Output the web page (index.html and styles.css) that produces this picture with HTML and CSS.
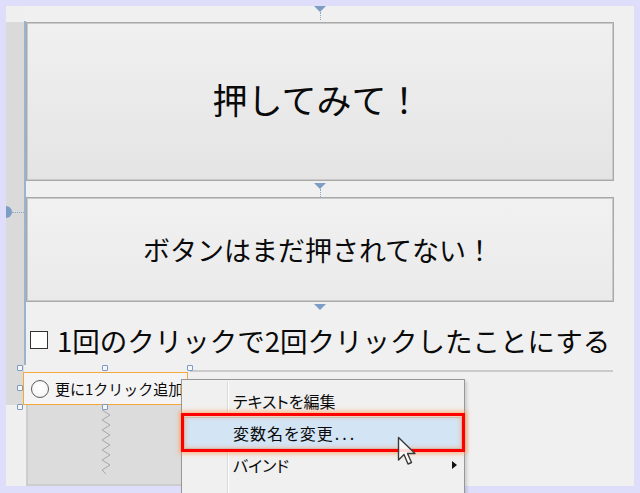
FILE: index.html
```html
<!DOCTYPE html>
<html lang="ja">
<head>
<meta charset="utf-8">
<link rel="stylesheet" href="styles.css">
</head>
<body>
<div class="panel">
  <div class="gutter"><div class="gutter-gray"></div></div>
  <div class="rail"></div>
  <div class="content">
    <div class="btn btn-big">押してみて！</div>
    <div class="btn btn-mid">ボタンはまだ押されてない！</div>
    <div class="check-row"><span class="box"></span><span>1回のクリックで2回クリックしたことにする</span></div>
    <div class="divider"></div>
    <div class="radio-row"><span class="radio"></span><span class="radio-text">更に1クリック追加</span></div>
    <div class="stack-area">
      <svg class="zigzag" width="14" height="64" viewBox="0 0 14 64"><polyline points="3,0 11,5 3,10 11,15 3,20 11,25 3,30 11,35 3,40 11,45 3,50 11,55 3,60 7,64" fill="none" stroke="#a8a8a8" stroke-width="1"/></svg>
    </div>
  </div>

  <div class="anchor anchor-top"><span class="tri"></span><span class="stem"></span></div>
  <div class="anchor anchor-mid"><span class="tri"></span><span class="stem"></span></div>
  <div class="anchor anchor-bot"><span class="tri"></span></div>
  <div class="anchor-left"><span class="half"></span><span class="hstem"></span></div>

  <span class="handle h1"></span>
  <span class="handle h2"></span>
  <span class="handle h3"></span>
  <span class="handle h4"></span>
  <span class="handle h5"></span>
  <span class="handle h6"></span>

  <div class="menu">
    <div class="item">テキストを編集</div>
    <div class="item active">変数名を変更<span class="dots">...</span></div>
    <div class="item">バインド<span class="sub"></span></div>
  </div>
  <div class="red-frame"></div>
  <svg class="cursor" width="22" height="32" viewBox="0 0 22 32"><path d="M1.5,1.5 L1.5,24 L7,18.5 L11,28 L14.5,26.5 L10.5,17.5 L18,17.5 Z" fill="#ffffff" fill-opacity="0.85" stroke="#3a3a3a" stroke-width="1.4" stroke-linejoin="round"/></svg>
</div>
</body>
</html>
```
FILE: styles.css
```css
html, body {
  margin: 0;
  padding: 0;
  overflow: hidden;
}
body {
  background: #dedefb;
  width: 640px;
  height: 493px;
  font-family: "Noto Sans CJK JP", "Noto Sans", sans-serif;
  color: #0a0a0a;
}
.panel {
  position: relative;
  margin: 6px;
  width: 628px;
  height: 480px;
  background: #f0f0f0;
  display: grid;
  grid-template-columns: 18px 2px 588px;
  align-items: start;
}
.gutter {
  height: 480px;
  background: #efefef;
  padding-top: 16px;
  box-sizing: border-box;
}
.gutter-gray {
  height: 383px;
  background: #dadada;
}
.rail {
  margin-top: 15px;
  height: 344px;
  background: #9db3cb;
}
.content {
  padding-top: 16px;
  display: flex;
  flex-direction: column;
}
.btn {
  box-sizing: border-box;
  border: 1px solid #a9a9a9;
  box-shadow: inset 0 0 0 1px #c9c9c9;
  display: flex;
  align-items: center;
  justify-content: center;
}
.btn-big {
  height: 159px;
  background: linear-gradient(#f0f0f0, #e4e4e4);
  font-size: 35px;
  padding-bottom: 6px;
  padding-right: 6px;
}
.btn-mid {
  margin-top: 16px;
  height: 105px;
  background: linear-gradient(#f1f1f1, #eaeaea);
  font-size: 27px;
  padding-right: 4px;
}
.check-row {
  height: 68px;
  display: flex;
  align-items: center;
  padding-left: 4px;
  padding-top: 8px;
  box-sizing: border-box;
  font-size: 27.5px;
  gap: 9px;
}
.box {
  width: 16px;
  height: 16px;
  border: 1px solid #333;
  background: #fff;
  flex: none;
}
.divider {
  height: 2px;
  margin-left: 164px;
  width: 423px;
  background: #cbcbcb;
}
.radio-row {
  box-sizing: border-box;
  height: 33px;
  width: 165px;
  margin-left: -3px;
  border: 1px solid #f2a93b;
  background: #f4f4f4;
  display: flex;
  align-items: center;
  padding-left: 7px;
  gap: 6px;
  font-size: 15px;
  white-space: nowrap;
  overflow: hidden;
}
.radio {
  width: 16px;
  height: 16px;
  border-radius: 50%;
  border: 1px solid #5a5a5a;
  background: radial-gradient(circle at 50% 40%, #ffffff, #f2f2f2);
  flex: none;
}
.stack-area {
  box-sizing: border-box;
  height: 81px;
  width: 170px;
  background: #dcdcdc;
  border-left: 2px solid #cdcdcd;
  border-bottom: 2px solid #cdcdcd;
  padding-left: 71px;
  padding-top: 5px;
}
.zigzag { display: block; }

/* anchors */
.anchor {
  position: absolute;
  left: 308px;
  width: 12px;
  display: flex;
  flex-direction: column;
  align-items: center;
}
.tri {
  width: 0;
  height: 0;
  border-left: 6px solid transparent;
  border-right: 6px solid transparent;
  border-top: 6px solid #7d9dc3;
}
.stem {
  width: 0;
  height: 8px;
  border-left: 1px dotted #8aa6c8;
}
.anchor-top { top: 0; }
.anchor-mid { top: 177px; }
.anchor-bot { top: 298px; }
.anchor-left {
  position: absolute;
  left: 0;
  top: 200px;
  display: flex;
  align-items: center;
}
.half {
  width: 6px;
  height: 12px;
  background: #7d9dc3;
  border-radius: 0 6px 6px 0;
}
.hstem {
  width: 12px;
  height: 0;
  border-top: 1px dotted #8aa6c8;
}

/* selection handles */
.handle {
  position: absolute;
  box-sizing: border-box;
  width: 6px;
  height: 6px;
  border: 1px solid #7c9ac0;
  border-radius: 1px;
  background: #f4f8fc;
}
.h1 { left: 11px; top: 359px; }
.h2 { left: 96px; top: 359px; }
.h3 { left: 181px; top: 359px; }
.h4 { left: 11px; top: 379px; }
.h5 { left: 11px; top: 398px; }
.h6 { left: 96px; top: 398px; }

/* context menu */
.menu {
  position: absolute;
  left: 175px;
  top: 373px;
  width: 284px;
  height: 118px;
  box-sizing: border-box;
  border: 1px solid #979797;
  background: #f0f0f0;
  padding: 5px 2px;
  font-size: 16px;
  font-feature-settings: "palt";
  box-shadow: 2px 2px 3px rgba(0,0,0,0.15);
}
.menu::before {
  content: "";
  position: absolute;
  left: 45px;
  top: 2px;
  bottom: 0;
  width: 1px;
  background: #d9d9d9;
  box-shadow: 1px 0 0 #ffffff;
}
.item {
  position: relative;
  height: 32px;
  box-sizing: border-box;
  display: flex;
  align-items: center;
  padding-left: 48px;
  border: 1px solid transparent;
}
.item.active {
  background: #d3e4f5;
  border-color: #b4cde6;
  letter-spacing: 1px;
}
.dots {
  letter-spacing: 3px;
  margin-left: 1px;
}
.sub {
  position: absolute;
  right: 4px;
  top: 11px;
  width: 0;
  height: 0;
  border-top: 4.5px solid transparent;
  border-bottom: 4.5px solid transparent;
  border-left: 5px solid #111;
}
.red-frame {
  position: absolute;
  left: 175px;
  top: 407px;
  width: 284px;
  height: 39px;
  box-sizing: border-box;
  border: 3px solid #ff0000;
  box-shadow: 0 0 4px 2px rgba(255, 150, 80, 0.6), inset 0 0 4px 1px rgba(255, 150, 80, 0.6);
}
.cursor {
  position: absolute;
  left: 391px;
  top: 430px;
}
```
